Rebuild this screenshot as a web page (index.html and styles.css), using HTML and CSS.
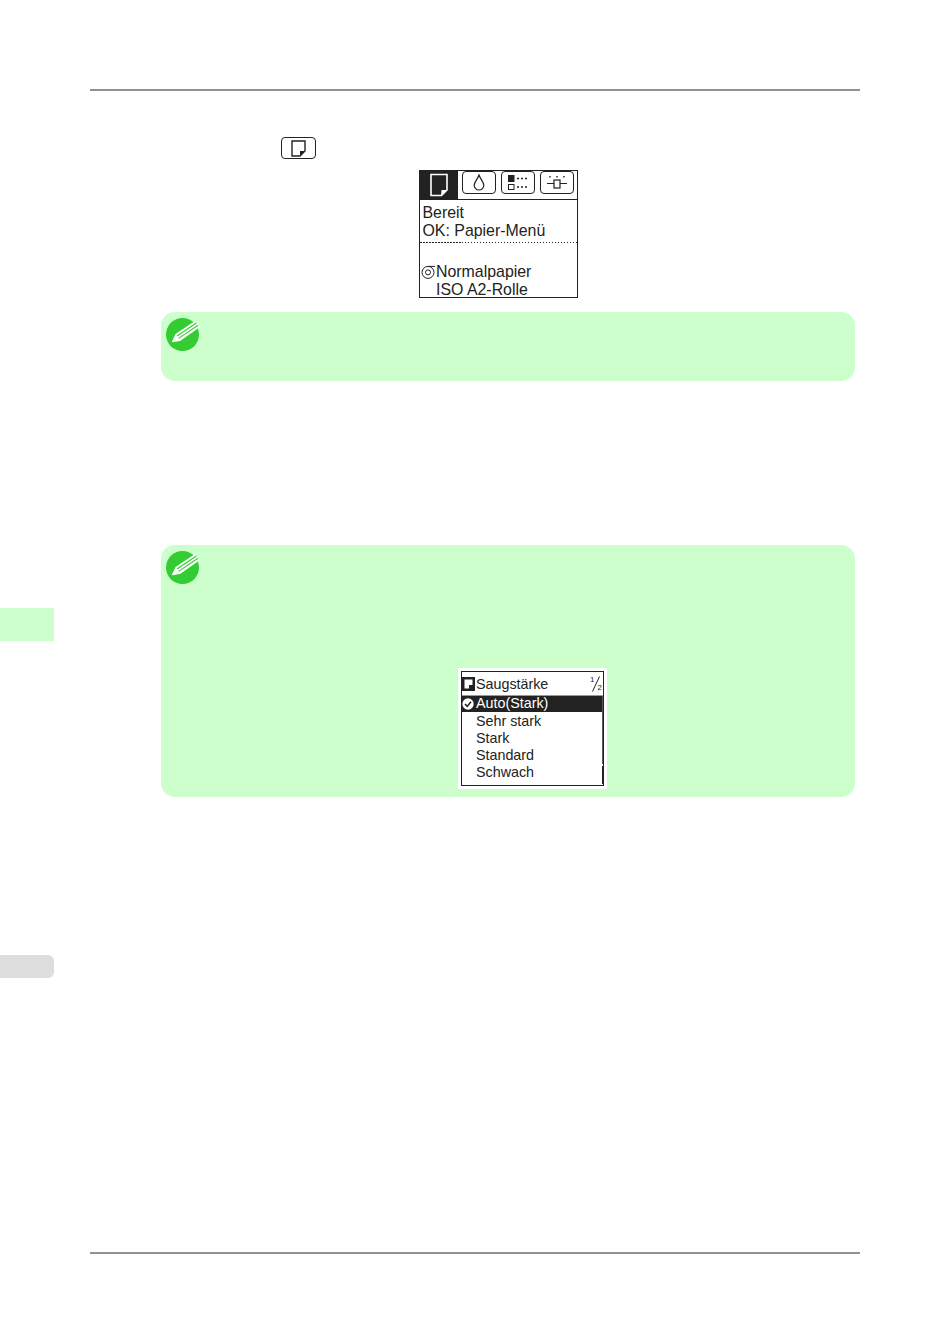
FILE: index.html
```html
<!DOCTYPE html>
<html lang="de">
<head>
    <meta charset="UTF-8">
    <meta name="viewport" content="width=device-width, initial-scale=1.0">
    <title>Papier-Menü</title>
    <link rel="stylesheet" href="styles.css">
</head>
<body>
    <div class="page">
        <aside class="rail">
            <div class="rail-tab rail-tab-green"></div>
            <div class="rail-tab rail-tab-gray"></div>
        </aside>

        <main class="sheet">
            <hr class="rule">

            <div class="key-row">
                <span class="key-button">
                    <svg width="15" height="17" viewBox="0 0 15 17">
                        <path d="M1 1H14V11L9 16H1Z" fill="none" stroke="#222" stroke-width="1.4"/>
                        <path d="M9 16V11H14Z" fill="#222"/>
                    </svg>
                </span>
            </div>

            <div class="lcd">
                <div class="lcd-tabs">
                    <div class="lcd-tab-active">
                        <svg width="20" height="24" viewBox="0 0 20 24">
                            <path d="M2 1.5H18V17L12.5 22.5H2Z" fill="none" stroke="#fff" stroke-width="1.6"/>
                            <path d="M12 22.5L12.5 17H18Z" fill="#fff"/>
                        </svg>
                    </div>
                    <div class="lcd-tab">
                        <svg width="12" height="17" viewBox="0 0 12 17">
                            <path d="M6 1C5 4.5 1.2 8 1.2 11.2A4.8 4.8 0 0 0 10.8 11.2C10.8 8 7 4.5 6 1Z" fill="none" stroke="#222" stroke-width="1.2"/>
                        </svg>
                    </div>
                    <div class="lcd-tab">
                        <svg width="24" height="17" viewBox="0 0 24 17">
                            <rect x="2" y="1" width="6.5" height="7" fill="#222"/>
                            <rect x="2.5" y="10.5" width="5.5" height="5" fill="none" stroke="#222"/>
                            <path d="M11 4.5H22M11 13H22" stroke="#222" stroke-width="1.6" stroke-dasharray="2 2"/>
                        </svg>
                    </div>
                    <div class="lcd-tab">
                        <svg width="26" height="17" viewBox="0 0 26 17">
                            <path d="M3 9.5H10M16 9.5H23" stroke="#222" stroke-width="1.2"/>
                            <rect x="10" y="6" width="6" height="8" fill="none" stroke="#222" stroke-width="1.2"/>
                            <path d="M6 2V3.5M13 2V3.5M20 2V3.5" stroke="#222" stroke-width="1.4"/>
                        </svg>
                    </div>
                </div>
                <div class="lcd-status">
                    <div>Bereit</div>
                    <div>OK: Papier-Menü</div>
                </div>
                <div class="lcd-paper">
                    <svg class="roll-icon" width="15" height="14" viewBox="0 0 15 14">
                        <circle cx="7" cy="7.4" r="6" fill="none" stroke="#222"/>
                        <circle cx="7" cy="7.4" r="2.5" fill="none" stroke="#222"/>
                        <path d="M7 1.4H14" stroke="#222"/>
                    </svg>
                    <div>Normalpapier</div>
                    <div>ISO A2-Rolle</div>
                </div>
            </div>

            <section class="note note-short">
                <svg class="note-icon" width="36" height="36" viewBox="0 0 36 36">
                    <circle cx="17.5" cy="17.5" r="16.5" fill="#33cc33"/>
                    <path d="M6.7 25.3L10.5 17L30 4L35 10L15 24Z" fill="#fff"/>
                    <path d="M12 19L31.4 6M13.6 21.4L33 8.2" stroke="#33cc33" stroke-width="1.1"/>
                </svg>
            </section>

            <section class="note note-tall">
                <svg class="note-icon" width="36" height="36" viewBox="0 0 36 36">
                    <circle cx="17.5" cy="17.5" r="16.5" fill="#33cc33"/>
                    <path d="M6.7 25.3L10.5 17L30 4L35 10L15 24Z" fill="#fff"/>
                    <path d="M12 19L31.4 6M13.6 21.4L33 8.2" stroke="#33cc33" stroke-width="1.1"/>
                </svg>
                <div class="menu-frame">
                    <div class="menu">
                        <div class="menu-head">
                            <svg class="menu-head-icon" width="13" height="14" viewBox="0 0 13 14">
                                <rect width="13" height="14" fill="#222"/>
                                <path d="M2.5 2.5H10.5V8H7V11.5H2.5Z" fill="#fff"/>
                            </svg>
                            <span>Saugstärke</span>
                            <span class="menu-page">
                                <span class="menu-page-top">1</span>
                                <svg class="menu-page-slash" width="8" height="16" viewBox="0 0 8 16">
                                    <path d="M0.5 15.5L7.5 0.5" stroke="#222"/>
                                </svg>
                                <span class="menu-page-bottom">2</span>
                            </span>
                        </div>
                        <div class="menu-body">
                            <div class="menu-list">
                                <div class="menu-item menu-item-active">
                                    <svg class="check-icon" width="12" height="12" viewBox="0 0 12 12">
                                        <circle cx="6" cy="6" r="5.7" fill="#fff"/>
                                        <path d="M3 6L5.2 8.4L9 3.8" fill="none" stroke="#222" stroke-width="1.6"/>
                                    </svg>
                                    Auto(Stark)
                                </div>
                                <div class="menu-item">Sehr stark</div>
                                <div class="menu-item">Stark</div>
                                <div class="menu-item">Standard</div>
                                <div class="menu-item">Schwach</div>
                            </div>
                            <div class="menu-scroll"></div>
                        </div>
                    </div>
                </div>
            </section>

            <hr class="rule rule-bottom">
        </main>
    </div>
</body>
</html>
```

FILE: styles.css
```css
* {
    margin: 0;
    padding: 0;
    box-sizing: border-box;
}

:root {
    --note-green: #ccffcc;
    --lcd-ink: #222;
    --rule-gray: #929292;
}

body {
    background: #fff;
    color: var(--lcd-ink);
    font-family: "Liberation Sans", Arial, sans-serif;
}

.page {
    display: flex;
    min-height: 1344px;
}

/* Side tabs */
.rail {
    width: 54px;
    flex-shrink: 0;
}

.rail-tab-green {
    margin-top: 608px;
    height: 33px;
    background: var(--note-green);
}

.rail-tab-gray {
    margin-top: 314px;
    height: 23px;
    background: #ddd;
    border-radius: 0 6px 6px 0;
}

/* Main column */
.sheet {
    width: 770px;
    margin-left: 36px;
    padding-top: 89px;
}

.rule {
    border: none;
    height: 2px;
    background: var(--rule-gray);
}

.rule-bottom {
    margin-top: 455px;
}

.key-row {
    margin-top: 46px;
    padding-left: 191px;
    display: flex;
}

.key-button {
    width: 35px;
    height: 22px;
    border: 1.5px solid var(--lcd-ink);
    border-radius: 4px;
    display: flex;
    align-items: center;
    justify-content: center;
}

/* LCD panel */
.lcd {
    width: 159px;
    height: 128px;
    margin: 11px 0 0 329px;
    border: 1px solid var(--lcd-ink);
    font-size: 15.9px;
    line-height: 18px;
}

.lcd-tabs {
    display: flex;
    gap: 5px;
    height: 29px;
    border-bottom: 1px solid var(--lcd-ink);
}

.lcd-tab-active {
    width: 38px;
    height: 28px;
    margin-right: -1px;
    background: var(--lcd-ink);
    display: flex;
    align-items: center;
    justify-content: center;
}

.lcd-tab {
    width: 34px;
    height: 23px;
    border: 1px solid var(--lcd-ink);
    border-radius: 4px;
    display: flex;
    align-items: center;
    justify-content: center;
}

.lcd-status {
    height: 43px;
    padding: 3.5px 0 0 2.5px;
    background: repeating-linear-gradient(90deg, var(--lcd-ink) 0 1.5px, transparent 1.5px 3px) bottom / 100% 1px no-repeat;
}

.lcd-paper {
    position: relative;
    padding: 20px 0 0 16px;
}

.roll-icon {
    position: absolute;
    left: 1px;
    top: 22px;
}

/* Note boxes */
.note {
    position: relative;
    width: 694px;
    margin-left: 71px;
    background: var(--note-green);
    border-radius: 14px;
}

.note-short {
    height: 69px;
    margin-top: 14px;
}

.note-tall {
    height: 252px;
    margin-top: 164px;
    padding-top: 123px;
}

.note-icon {
    position: absolute;
    left: 4px;
    top: 5px;
}

/* Media menu */
.menu-frame {
    width: 149px;
    height: 121px;
    margin-left: 297px;
    padding: 3px 3px;
    background: #fff;
}

.menu {
    height: 115px;
    border: 1px solid var(--lcd-ink);
    font-size: 14.3px;
}

.menu-head {
    display: flex;
    align-items: center;
    height: 24px;
    border-bottom: 1px solid #999;
}

.menu-head-icon {
    margin-right: 1px;
}

.menu-page {
    display: flex;
    height: 16px;
    margin-left: auto;
    padding-right: 1px;
    font-size: 8px;
    line-height: 8px;
}

.menu-page-top {
    align-self: flex-start;
}

.menu-page-slash {
    margin: 0 -2px 0 -3px;
}

.menu-page-bottom {
    align-self: flex-end;
}

.menu-body {
    display: flex;
}

.menu-list {
    flex: 1;
}

.menu-item {
    position: relative;
    height: 17.3px;
    padding-left: 14px;
    line-height: 17px;
}

.menu-item-active {
    height: 15.5px;
    margin-bottom: 1px;
    background: var(--lcd-ink);
    color: #fff;
    line-height: 15.5px;
}

.check-icon {
    position: absolute;
    left: 0;
    top: 2px;
}

.menu-scroll {
    width: 1.5px;
    height: 88px;
    background: linear-gradient(#555 0 68px, #fff 68px 70px, var(--lcd-ink) 70px);
}
```
